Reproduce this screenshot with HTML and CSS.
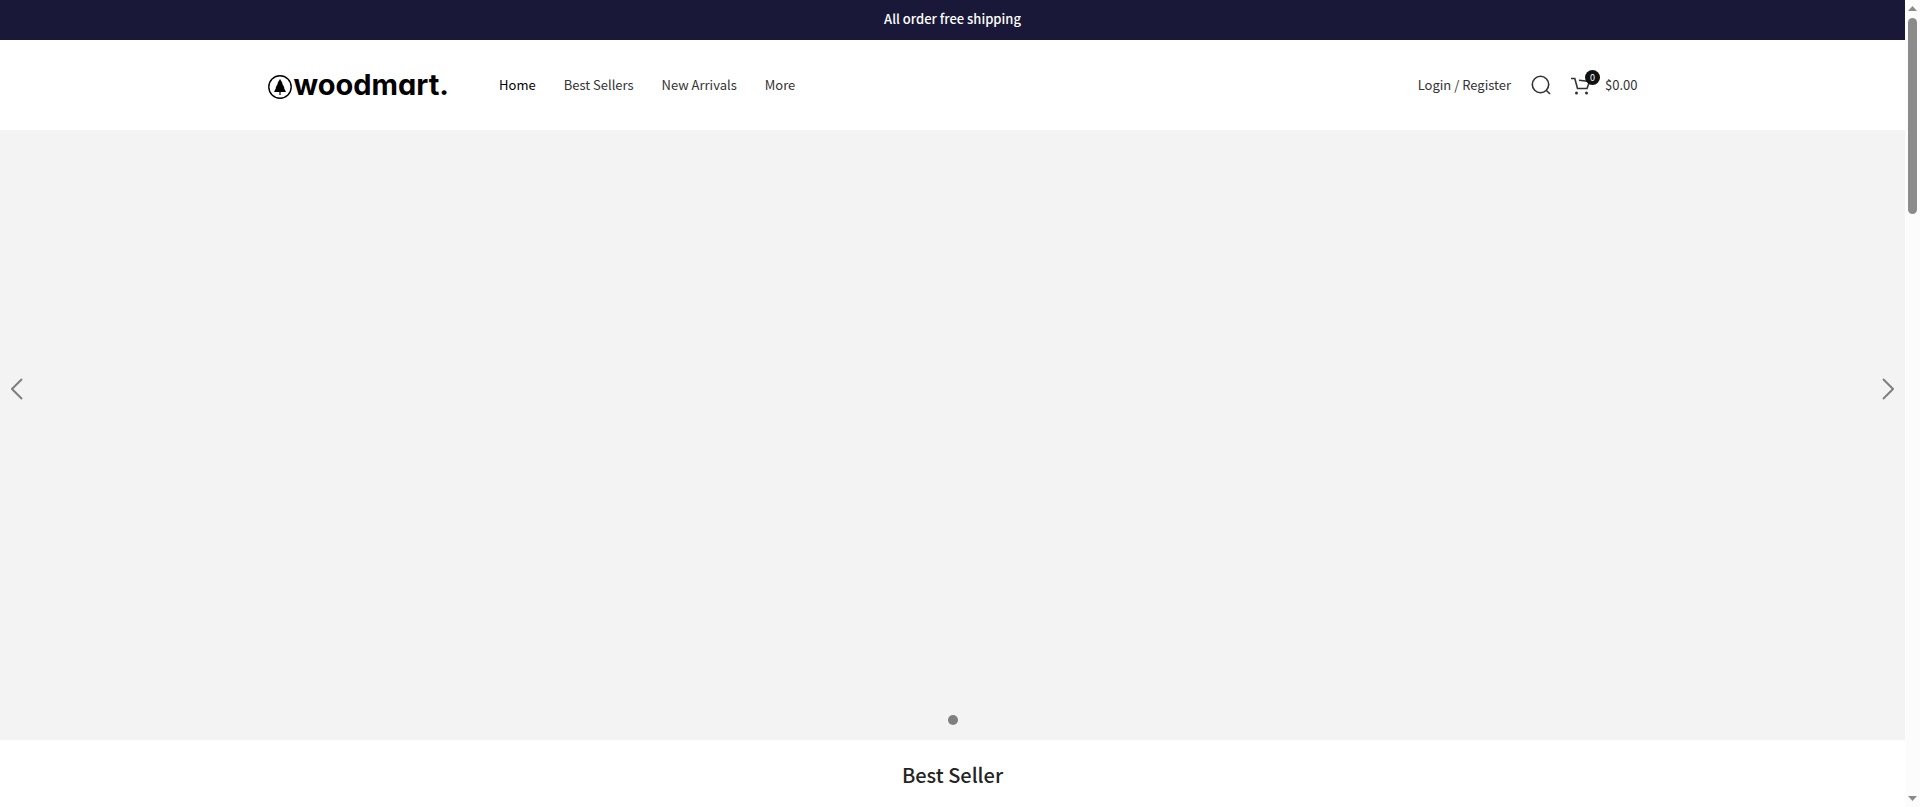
FILE: index.html
```html
<!DOCTYPE html>
<html lang="en">
<head>
    <meta charset="UTF-8">
    <meta name="viewport" content="width=device-width, initial-scale=1.0">
    <title>Woodmart</title>
    <link rel="stylesheet" href="styles.css">
</head>
<body>
    <div class="page">
        <div class="topbar">All order free shipping</div>

        <header class="header">
            <div class="container">
                <a href="#" class="logo">
                    <svg width="24" height="24" viewBox="0 0 24 24">
                        <circle cx="12" cy="12" r="11.2" fill="none" stroke="#000" stroke-width="1.4"/>
                        <path d="M12 4L14.6 8.2L14.1 8.4L16.4 12.4L15.8 12.6L18 17H12.6V20H11.4V17H6L8.2 12.6L7.6 12.4L9.9 8.4L9.4 8.2Z"/>
                    </svg>
                    <span>woodmart.</span>
                </a>

                <nav class="nav">
                    <a href="#" class="active">Home</a>
                    <a href="#">Best Sellers</a>
                    <a href="#">New Arrivals</a>
                    <a href="#">More</a>
                </nav>

                <div class="tools">
                    <a href="#">Login / Register</a>
                    <button class="search" aria-label="Search">
                        <svg width="20" height="20" viewBox="0 0 20 20">
                            <circle cx="9.5" cy="9.5" r="8.2"/>
                            <path d="M15.2 15.2L19 19"/>
                        </svg>
                    </button>
                    <a href="#" class="cart">
                        <span class="cart-icon">
                            <svg width="20" height="20" viewBox="0 0 20 20">
                                <path d="M0 3.5H3.8L6.5 13.5H16L18.5 6.5L8 5.2"/>
                                <circle class="wheel" cx="5.5" cy="18" r="1.5"/>
                                <circle class="wheel" cx="15.5" cy="18" r="1.5"/>
                            </svg>
                            <span class="badge">0</span>
                        </span>
                        <span class="total">$0.00</span>
                    </a>
                </div>
            </div>
        </header>

        <section class="slider">
            <button class="arrow prev" aria-label="Previous">
                <svg width="12" height="22" viewBox="0 0 12 22"><path d="M11 1L1 11L11 21"/></svg>
            </button>
            <button class="arrow next" aria-label="Next">
                <svg width="12" height="22" viewBox="0 0 12 22"><path d="M1 1L11 11L1 21"/></svg>
            </button>
            <button class="dot" aria-label="Slide 1"></button>
        </section>

        <h2 class="title">Best Seller</h2>
    </div>

    <div class="scrollbar">
        <svg width="9" height="5" viewBox="0 0 9 5"><path d="M0 5L4.5 0L9 5Z"/></svg>
        <div class="track"><div class="thumb"></div></div>
        <svg width="9" height="5" viewBox="0 0 9 5"><path d="M0 0L4.5 5L9 0Z"/></svg>
    </div>
</body>
</html>
```
FILE: styles.css
```css
* {
    margin: 0;
    padding: 0;
    box-sizing: border-box;
}

body {
    display: flex;
    height: 100vh;
    overflow: hidden;
    background: #fff;
    color: #333;
    font-family: "Noto Sans CJK SC", "Noto Sans", sans-serif;
    font-size: 13px;
    line-height: 20px;
}

a {
    color: inherit;
    text-decoration: none;
}

button {
    border: none;
    background: none;
    cursor: pointer;
}

svg {
    display: block;
}

.page {
    flex: 1;
}

.topbar {
    height: 40px;
    padding-top: 9px;
    background: #1a1838;
    color: #fff;
    font-weight: 500;
    text-align: center;
}

/* header */
.container {
    display: flex;
    align-items: center;
    max-width: 1400px;
    height: 90px;
    margin: 0 auto;
    padding: 0 15px;
}

.logo {
    display: flex;
    align-items: flex-end;
    gap: 2px;
    color: #000;
    font-family: Inter, sans-serif;
    font-size: 29px;
    font-weight: 700;
    font-feature-settings: "cv11";
    line-height: 28px;
}

.nav {
    display: flex;
    gap: 28px;
    margin-left: 50px;
}

.nav .active {
    color: #000;
}

.tools {
    display: flex;
    align-items: center;
    gap: 20px;
    margin-left: auto;
}

.tools svg {
    fill: none;
    stroke: #333;
    stroke-width: 1.6;
}

.tools .wheel {
    fill: #333;
    stroke: none;
}

.cart {
    display: flex;
    align-items: center;
    gap: 14px;
}

.cart-icon {
    position: relative;
}

.badge {
    position: absolute;
    top: -5px;
    right: -9px;
    width: 15px;
    height: 15px;
    border-radius: 50%;
    background: #111;
    color: #fff;
    font-size: 9px;
    line-height: 15px;
    text-align: center;
}

/* slider */
.slider {
    position: relative;
    display: flex;
    justify-content: center;
    align-items: flex-end;
    height: 610px;
    padding-bottom: 15px;
    background: #f3f3f3;
}

.arrow {
    position: absolute;
    top: 248px;
}

.arrow svg {
    fill: none;
    stroke: #7f7f7f;
    stroke-width: 2;
}

.prev {
    left: 11px;
}

.next {
    right: 11px;
}

.dot {
    width: 10px;
    height: 10px;
    border-radius: 50%;
    background: #7f7f7f;
}

.title {
    padding-top: 19px;
    color: #242424;
    font-size: 20px;
    font-weight: 500;
    line-height: 32px;
    text-align: center;
}

/* scrollbar */
.scrollbar {
    display: flex;
    flex-direction: column;
    align-items: center;
    gap: 7px;
    width: 15px;
    padding: 6px 0;
    background: #fcfcfc;
    fill: #8b8b8b;
}

.track {
    flex: 1;
    width: 9px;
}

.thumb {
    height: 196px;
    border-radius: 5px;
    background: #8b8b8b;
}
```
